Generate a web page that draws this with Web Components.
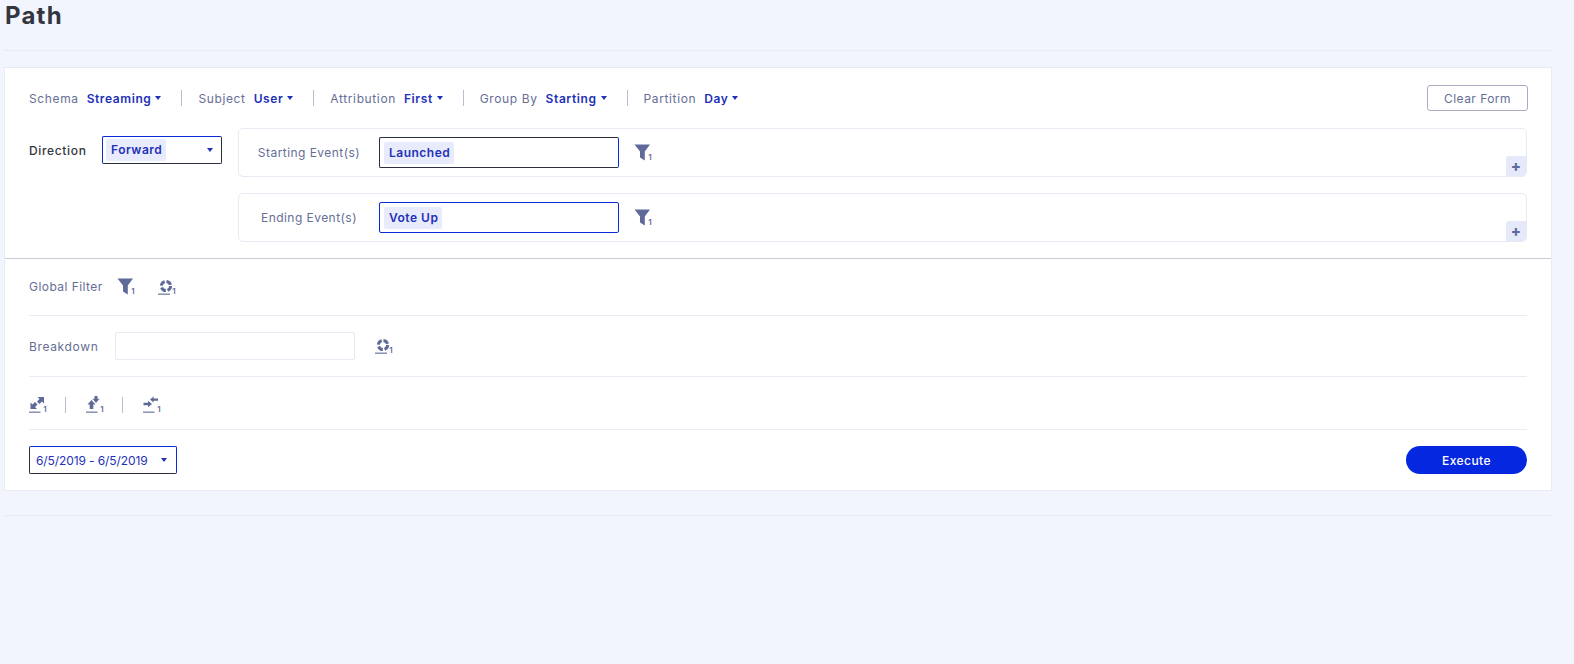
<!DOCTYPE html>
<html>
<head>
<meta charset="utf-8">
<title>Path</title>
<style>
    html, body { margin: 0; height: 100%; }
    body {
        background: #f2f5fe;
        font-family: Inter, "Open Sans", "Liberation Sans", sans-serif;
        overflow: hidden;
    }
</style>
</head>
<body>
<template id="iconTemplate">
    <style>
        :host { display: inline-flex; position: relative; flex: none; width: 18px; height: 18px; color: #5f6a99; }
        svg { display: block; width: 18px; height: 18px; }
        span { position: absolute; right: 0; bottom: 1px; font-size: 8px; line-height: 7px; font-weight: 600; }
    </style>
    <svg viewBox="0 0 18 18" fill="currentColor"></svg><span>1</span>
</template>

<script>
const underline = '<rect x="0" y="15.6" width="11.5" height="1.1"/>';
const iconPaths = {
    filter: '<path d="M.5.5H16L10.800 7.500V16.500L6 13.500V7.500z"/>',
    breakdown: '<circle cx="8" cy="8" r="4.600" fill="none" stroke="currentColor" stroke-width="3" stroke-dasharray="5.400 1.800"/><rect x="0" y="15.6" width="12" height="1.1"/>',
    diverge: '<path d="M1.500 13V6.500l2 2L6 6l2.500 2.500L6 11l2 2zM15 1v6.500l-2-2-2.500 2.500L8 5.500 10.500 3l-2-2z"/>' + underline,
    collapse: '<path d="M5.500 4l4 4.500H7.300V13H3.700V8.500H1.500zM8.500 0h3v2.800h2L10 7 6.500 2.800h2z"/>' + underline,
    merge: '<path d="M.500 6.800H5V4.800L9 8l-4 3.200V9.200H.500zM15 2.500h-4.500V.500L7 3.500l3.500 3V4.700H15z"/>' + underline
};

class PathIcon extends HTMLElement {
    connectedCallback() {
        const root = this.attachShadow({mode: 'open'});
        root.appendChild(document.getElementById('iconTemplate').content.cloneNode(true));
        root.querySelector('svg').innerHTML = iconPaths[this.getAttribute('name')];
    }
}
customElements.define('path-icon', PathIcon);

class PathCaret extends HTMLElement {
    connectedCallback() {
        this.attachShadow({mode: 'open'}).innerHTML = `
            <style>
                :host { display: inline-block; width: 0; height: 0; border-top: 4px solid currentColor;
                    border-left: 3.5px solid transparent; border-right: 3.5px solid transparent; }
            </style>`;
    }
}
customElements.define('path-caret', PathCaret);

class PathOption extends HTMLElement {
    connectedCallback() {
        this.attachShadow({mode: 'open'}).innerHTML = `
            <style>
                :host { display: flex; align-items: center; font-size: 12px; letter-spacing: .62px; color: #666e96; white-space: nowrap; }
                b { margin-left: 8px; font-weight: 600; letter-spacing: .6px; color: #2231b8; }
                path-caret { margin-left: 4px; color: #2231b8; }
            </style>
            <slot></slot><b>${this.getAttribute('value')}</b><path-caret></path-caret>`;
    }
}
customElements.define('path-option', PathOption);

class PathPill extends HTMLElement {
    connectedCallback() {
        this.attachShadow({mode: 'open'}).innerHTML = `
            <style>
                :host { display: inline-flex; box-sizing: border-box; align-items: center; height: 22px; padding: 0 4px 1px 5px; background: #e8ebfb;
                    border-radius: 2px; font-size: 12px; font-weight: 600; letter-spacing: .5px; color: #2231b8; }
            </style>
            <slot></slot>`;
    }
}
customElements.define('path-pill', PathPill);

class PathEvent extends HTMLElement {
    connectedCallback() {
        this.attachShadow({mode: 'open'}).innerHTML = `
            <style>
                :host { display: block; position: relative; box-sizing: border-box; height: 49px; background: #fff;
                    border: 1px solid #e8eaf3; border-radius: 5px; }
                .row { display: flex; align-items: center; height: 47px; }
                label { width: 140px; text-align: center; font-size: 12px; letter-spacing: .45px; color: #666e96; }
                .box { box-sizing: border-box; width: 240px; height: 31px; padding: 0 0 0 4px; display: flex; align-items: center;
                    background: #fff; border: 1px solid #0a2bd6; border-radius: 2px; }
                :host([dark]) .box { border-top-color: #2b2f3f; border-left-color: #2b2f3f; border-bottom-color: #2b2f3f; }
                path-icon { margin-left: 15px; }
                .add { position: absolute; right: 0; bottom: 0; width: 20px; height: 20px; display: flex; align-items: center;
                    justify-content: center; background: #e6e9fa; border-radius: 3px 0 4px 0; color: #5f6a99; font-size: 15px; font-weight: 800; line-height: 1; }
            </style>
            <div class="row">
                <label>${this.getAttribute('label')}</label>
                <div class="box"><slot></slot></div>
                <path-icon name="filter"></path-icon>
            </div>
            <div class="add">+</div>`;
    }
}
customElements.define('path-event', PathEvent);

class PathPage extends HTMLElement {
    connectedCallback() {
        this.attachShadow({mode: 'open'}).innerHTML = `
            <style>
                :host { display: block; padding: 0 22px 0 4px; color: #666e96; font-size: 12px; letter-spacing: .45px; }
                h1 { margin: 0; height: 50px; padding-left: 1px; border-bottom: 1px solid #e8ebf4;
                    font-size: 24px; line-height: 32px; font-weight: 700; letter-spacing: 1.2px; color: #33363f; }
                .card { margin-top: 16px; background: #fff; border: 1px solid #e8ebf4; height: 424px; box-sizing: border-box; }
                .top { height: 191px; box-sizing: border-box; border-bottom: 1px solid #c8cad6; padding: 17px 24px 0 24px; }
                .options { display: flex; align-items: center; height: 26px; }
                .sep { width: 1px; height: 16px; background: #b9bdcf; margin: 0 16px 0 20px; }
                .clear { margin-left: auto; box-sizing: border-box; width: 101px; height: 26px; margin-right: -1px; display: flex; align-items: center;
                    justify-content: center; border: 1px solid #a9adc4; border-radius: 3px; font-size: 12px; color: #666e96; }
                .form { display: flex; margin-top: 17px; }
                .dir { display: flex; align-items: center; height: 28px; margin-top: 8px; width: 209px; flex: none; color: #33363f; font-weight: 500; letter-spacing: .65px; }
                .dir span { width: 73px; flex: none; }
                .select { box-sizing: border-box; width: 120px; height: 28px; padding: 2px 2px 2px 3px; display: flex; align-items: center;
                    justify-content: space-between; border: 1px solid #0a2bd6; border-right-color: #2b2f3f; border-bottom-color: #2b2f3f; border-radius: 2px; }
                .select path-caret { margin-right: 6px; color: #2231b8; }
                .events { flex: 1; display: flex; flex-direction: column; gap: 16px; }
                .section { padding: 0 24px; }
                .row { display: flex; align-items: center; border-bottom: 1px solid #e8ebf4; box-sizing: border-box; }
                .filter-row { height: 57px; }
                .filter-row span { width: 88px; flex: none; padding-bottom: 2px; }
                .break-row { height: 61px; }
                .break-row span { width: 86px; flex: none; letter-spacing: .65px; }
                .tool-row { height: 53px; padding-top: 3px; }
                .input { box-sizing: border-box; width: 240px; height: 28px; border: 1px solid #e8eaf3; border-radius: 2px; }
                .tool-sep { width: 1px; height: 16px; background: #b9bdcf; margin: 0 20px 0 18px; }
                .exec { display: flex; justify-content: space-between; align-items: center; padding-top: 16px; }
                .date { box-sizing: border-box; width: 148px; height: 28px; display: flex; align-items: center; justify-content: space-between; padding: 0 9px 0 6px;
                    border: 1px solid #0a2bd6; border-left-color: #2b2f3f; border-bottom-color: #2b2f3f; border-radius: 2px; color: #2231b8; font-size: 12px; letter-spacing: -.1px; }
                .run { width: 121px; height: 28px; display: flex; align-items: center; justify-content: center;
                    background: #0527e0; border-radius: 14px; color: #fff; font-size: 12px; font-weight: 500; }
                .foot { height: 24px; border-bottom: 1px solid #e8ebf4; }
            </style>
            <h1>Path</h1>
            <div class="card">
                <div class="top">
                    <div class="options">
                        <path-option value="Streaming">Schema</path-option><div class="sep"></div>
                        <path-option value="User">Subject</path-option><div class="sep"></div>
                        <path-option value="First">Attribution</path-option><div class="sep"></div>
                        <path-option value="Starting">Group By</path-option><div class="sep"></div>
                        <path-option value="Day">Partition</path-option>
                        <div class="clear">Clear Form</div>
                    </div>
                    <div class="form">
                        <div class="dir"><span>Direction</span><div class="select"><path-pill>Forward</path-pill><path-caret></path-caret></div></div>
                        <div class="events">
                            <path-event label="Starting Event(s)" dark><path-pill>Launched</path-pill></path-event>
                            <path-event label="Ending Event(s)"><path-pill>Vote Up</path-pill></path-event>
                        </div>
                    </div>
                </div>
                <div class="section">
                    <div class="row filter-row"><span>Global Filter</span>
                        <path-icon name="filter"></path-icon>
                        <path-icon name="breakdown" style="margin-left:23px"></path-icon>
                    </div>
                    <div class="row break-row"><span>Breakdown</span><div class="input"></div>
                        <path-icon name="breakdown" style="margin-left:20px"></path-icon>
                    </div>
                    <div class="row tool-row">
                        <path-icon name="diverge"></path-icon><div class="tool-sep"></div>
                        <path-icon name="collapse"></path-icon><div class="tool-sep"></div>
                        <path-icon name="merge"></path-icon>
                    </div>
                    <div class="exec">
                        <div class="date">6/5/2019 - 6/5/2019<path-caret></path-caret></div>
                        <div class="run">Execute</div>
                    </div>
                </div>
            </div>
            <div class="foot"></div>`;
    }
}
customElements.define('path-page', PathPage);
</script>
<path-page></path-page>
</body>
</html>
